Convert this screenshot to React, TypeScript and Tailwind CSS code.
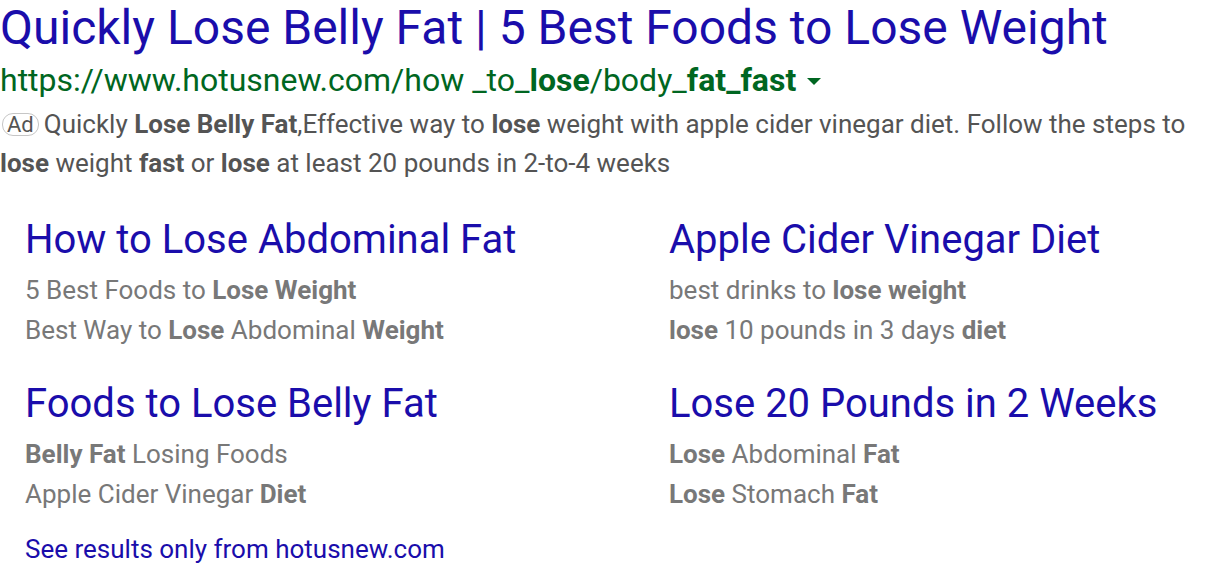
import React from "react";

const B = ({ children }: { children: React.ReactNode }) => <b className="font-bold">{children}</b>;

function Sitelink({ title, lines }: { title: string; lines: React.ReactNode[] }) {
  return (
    <div className="flex flex-col">
      <div className="text-[40px] leading-[56px] mb-[2px] text-[#1a0dab] whitespace-nowrap">{title}</div>
      {lines.map((l, i) => (
        <div key={i} className="text-[26px] leading-[40px] text-[#787878] whitespace-nowrap">{l}</div>
      ))}
    </div>
  );
}

export default function App() {
  return (
    <div className="w-[1216px] h-[572px] bg-white overflow-hidden" style={{ fontFamily: "Roboto, 'Liberation Sans', sans-serif" }}>
      <div className="text-[48px] leading-[56px] text-[#1a0dab] whitespace-nowrap">
        Quickly Lose Belly Fat | 5 Best Foods to Lose Weight
      </div>
      <div className="flex items-center pt-[2px] text-[32px] leading-[44px] text-[#006621] whitespace-nowrap">
        <span>
          https://www.hotusnew.com/how _to_<B>lose</B>/body_<B>fat_fast</B>
        </span>
        <svg width="14" height="8" viewBox="0 0 14 8" className="ml-[11px] mt-[4px]">
          <path d="M0 0 L14 0 L7 7 Z" fill="#006621" />
        </svg>
      </div>
      <div className="text-[26px] leading-[39px] text-[#545454] mt-[3px] whitespace-nowrap">
        <span className="inline-block align-[1px] text-[22px] leading-[21px] px-[4px] mr-[5px] ml-[2px] border border-[#c6c6c6] rounded-[11px] text-[#545454]">Ad</span>
        Quickly <B>Lose Belly Fat</B>,Effective way to <B>lose</B> weight with apple cider vinegar diet. Follow the steps to
        <br />
        <B>lose</B> weight <B>fast</B> or <B>lose</B> at least 20 pounds in 2-to-4 weeks
      </div>
      <div className="grid grid-cols-[644px_1fr] pl-[25px] mt-[29px] gap-y-[26px]">
        <Sitelink title="How to Lose Abdominal Fat" lines={[<>5 Best Foods to <B>Lose Weight</B></>, <>Best Way to <B>Lose</B> Abdominal <B>Weight</B></>]} />
        <Sitelink title="Apple Cider Vinegar Diet" lines={[<>best drinks to <B>lose weight</B></>, <><B>lose</B> 10 pounds in 3 days <B>diet</B></>]} />
        <Sitelink title="Foods to Lose Belly Fat" lines={[<><B>Belly Fat</B> Losing Foods</>, <>Apple Cider Vinegar <B>Diet</B></>]} />
        <Sitelink title="Lose 20 Pounds in 2 Weeks" lines={[<><B>Lose</B> Abdominal <B>Fat</B></>, <><B>Lose</B> Stomach <B>Fat</B></>]} />
      </div>
      <div className="pl-[25px] mt-[15px] text-[26px] leading-[40px] text-[#1a0dab] whitespace-nowrap">See results only from hotusnew.com</div>
    </div>
  );
}
